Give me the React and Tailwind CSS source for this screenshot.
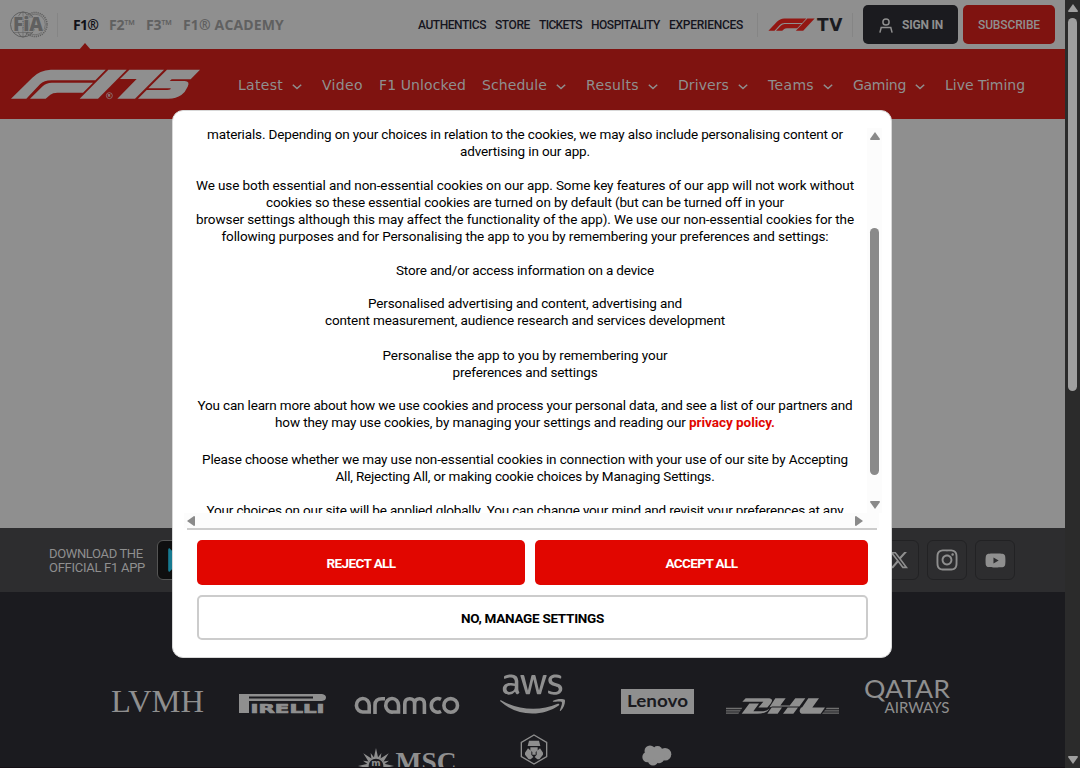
import React, { useLayoutEffect, useRef, useState } from "react";
import { FaAws, FaXTwitter, FaInstagram, FaYoutube, FaGooglePlay } from "react-icons/fa6";

/* Text tracked so that it fills a given width. */
function Fit({ w, className = "", children }) {
  const ref = useRef(null);
  const [spacing, setSpacing] = useState(0);
  useLayoutEffect(() => {
    const el = ref.current;
    el.style.letterSpacing = "0px";
    const natural = el.getBoundingClientRect().width;
    setSpacing((w - natural) / children.length);
    el.style.letterSpacing = `${(w - natural) / children.length}px`;
  }, [w, children]);
  return (
    <span ref={ref} className={`inline-block shrink-0 whitespace-pre ${className}`} style={{ letterSpacing: `${spacing}px` }}>
      {children}
    </span>
  );
}

function Chevron() {
  return (
    <svg className="ml-[9px] mt-[3px] h-[6px] w-[14px]" viewBox="0 0 14 6" fill="none" stroke="currentColor" strokeWidth="1.5">
      <path d="M.8.8 5 4.6 9.2.8" />
    </svg>
  );
}

const F1_SHAPES = (
  <>
    <path d="M33 296 97 233Q119 210 152 209H317L286 241H154Q132 241 120 253L79 296Z" />
    <path d="M90 296 128 259Q139 248 155 248H279L249 278H172Q158 278 151 284L137 296Z" />
    <path d="M325 209H380L294 296H239Z" />
  </>
);

function SeriesBar() {
  const series = [["F1®", 25], ["F2™", 26], ["F3™", 26], ["F1® ACADEMY", 101]];
  const links = [["AUTHENTICS", 68], ["STORE", 35], ["TICKETS", 43], ["HOSPITALITY", 69], ["EXPERIENCES", 74]];
  return (
    <div className="flex h-[49px] items-center bg-[#8f8f8f] pl-[10px] pr-[10px]">
      <svg className="h-[27px] w-[38px] shrink-0" viewBox="0 0 38 27" fill="none" stroke="#606060">
        <circle cx="13" cy="13.5" r="12.5" strokeWidth="1" />
        <ellipse cx="13" cy="13.5" rx="6" ry="12.5" strokeWidth=".8" />
        <path d="M13 1V26M3 6H23M3 21.5H23" strokeWidth=".6" />
        <circle cx="25" cy="13.5" r="12" strokeWidth="1.6" strokeDasharray="1.2 .9" />
        <circle cx="25" cy="13.5" r="10.3" strokeWidth=".6" />
        <text x="3" y="20.3" fill="#606060" stroke="#8f8f8f" strokeWidth="1.6" paintOrder="stroke" fontFamily="Open Sans, sans-serif" fontWeight="800" fontSize="19" textLength="30" lengthAdjust="spacingAndGlyphs">FiA</text>
      </svg>
      <div className="ml-[9px] h-6 w-px bg-[#858585]" />
      <nav className="ml-[15px] flex items-center gap-[11px] font-['Open_Sans',sans-serif] text-[14px] font-bold leading-[47px] text-[#606060]">
        {series.map(([t, w], i) => (
          <Fit key={t} w={w} className={i === 0 ? "text-[#111118]" : ""}>{t}</Fit>
        ))}
      </nav>
      <nav className="ml-auto flex items-center gap-[9px] pt-px text-[12px] font-medium text-[#15151e]">
        {links.map(([t, w]) => (
          <Fit key={t} w={w}>{t}</Fit>
        ))}
      </nav>
      <div className="ml-[14px] h-6 w-px bg-[#858585]" />
      <svg className="ml-[10px] h-[13px] w-[48px]" viewBox="30 206 360 92" preserveAspectRatio="none" fill="#931713">
        {F1_SHAPES}
      </svg>
      <Fit w={26} className="ml-[1px] font-['DejaVu_Sans',sans-serif] text-[17px] font-bold leading-[24px] text-[#1b1b1f]">TV</Fit>
      <div className="ml-[9px] h-6 w-px bg-[#858585]" />
      <button className="ml-[10px] flex h-[39px] w-[95px] items-center rounded-[5px] bg-[#1b1b1f] pl-4 text-[12px] font-bold text-[#8f8f8f]">
        <svg className="mt-px h-[15px] w-[14px]" viewBox="0 0 14 15" fill="none" stroke="#8f8f8f" strokeWidth="1.5">
          <circle cx="7" cy="4" r="3.1" />
          <path d="M.9 14.6 2.2 9.6H11.8L13.1 14.6" />
        </svg>
        <Fit w={41} className="ml-[9px]">SIGN IN</Fit>
      </button>
      <button className="ml-[5px] flex h-[39px] w-[92px] items-center justify-center rounded-[5px] bg-[#7f1310] text-[12px] font-medium text-[#8f8f8f]">
        <Fit w={62}>SUBSCRIBE</Fit>
      </button>
    </div>
  );
}

function MainNav() {
  const items = [
    ["Latest", 45, 1], ["Video", 41, 0], ["F1 Unlocked", 87, 0], ["Schedule", 65, 1], ["Results", 53, 1],
    ["Drivers", 51, 1], ["Teams", 46, 1], ["Gaming", 53, 1], ["Live Timing", 80, 0],
  ];
  return (
    <div className="relative flex h-[70px] items-center bg-[#7f1310] pl-[10px] text-[#8f8f8f]">
      <svg className="absolute -top-[6px] left-[79px] h-[7px] w-3" viewBox="0 0 12 7" fill="#7f1310">
        <path d="M0 7 6 0 12 7Z" />
      </svg>
      <svg className="h-[31px] w-[190px] shrink-0" viewBox="30 207 570 93" fill="#8f8f8f">
        {F1_SHAPES}
        <path d="M388 209H492L405 296H352L410 237H360Z" />
        <path d="M501 209H600L572 238H515L509 243H554Q571 244 563 260 556 276 544 285 529 296 505 296H414L440 270H502Q513 270 512 265H445Z" />
        <circle cx="328" cy="287" r="9" fill="none" stroke="#8f8f8f" strokeWidth="2" />
        <text x="323.5" y="292" fontSize="13" fontFamily="Roboto, sans-serif" fontWeight="700">R</text>
      </svg>
      <nav className="ml-[38px] flex items-center gap-4 pt-[2px] font-['DejaVu_Sans',sans-serif] text-[14px] leading-5">
        {items.map(([t, w, menu]) => (
          <div key={t} className="flex items-center">
            <Fit w={w}>{t}</Fit>
            {menu ? <Chevron /> : null}
          </div>
        ))}
      </nav>
    </div>
  );
}

function AppStrip() {
  const box = "flex h-10 w-10 items-center justify-center rounded-md border border-[#222224]";
  return (
    <div className="flex h-16 items-center bg-[#2d2d2f] pl-[49px] pr-[50px] text-[#8f8f8f]">
      <div className="flex flex-col pt-[2px] text-[13px] leading-[14px]">
        <Fit w={96}>DOWNLOAD THE</Fit>
        <Fit w={96}>OFFICIAL F1 APP</Fit>
      </div>
      <div className="ml-3 flex h-10 w-[120px] items-center rounded-md border border-[#555555] bg-[#0f0f10] pl-[9px]">
        <FaGooglePlay className="h-[26px] w-6 text-[#177a91]" />
      </div>
      <div className="ml-auto flex gap-2">
        <div className={box}><FaXTwitter className="h-5 w-5" /></div>
        <div className={box}><FaInstagram className="h-6 w-6" /></div>
        <div className={box}><FaYoutube className="h-[21px] w-[21px]" /></div>
      </div>
    </div>
  );
}

const LOGO = "shrink-0 overflow-visible fill-[#8f8f8f]";

function Partners() {
  const rays = Array.from({ length: 16 }, (_, i) => i);
  return (
    <div className="h-[176px] overflow-hidden border-b border-[#151015] bg-[#1b1b1f]">
      <div className="flex h-[122px] items-end pl-[111px]">
        <svg className={`${LOGO} mb-px h-6 w-[93px]`} viewBox="0 0 93 24">
          <text x="0" y="23" fontFamily="Liberation Serif, serif" fontSize="32" textLength="93" lengthAdjust="spacingAndGlyphs">LVMH</text>
        </svg>
        <svg className={`${LOGO} ml-[35px] h-5 w-[88px]`} viewBox="0 0 88 20">
          <path fillRule="evenodd" d="M0 0H83Q87 .5 87 3.5T83 7H10V19H0ZM10 2.5V4.5H74V2.5Z" />
          <text x="11.5" y="19" fontFamily="DejaVu Sans, sans-serif" fontWeight="700" fontSize="13" stroke="#8f8f8f" strokeWidth=".7" textLength="74" lengthAdjust="spacingAndGlyphs">IRELLI</text>
        </svg>
        <svg className={`${LOGO} ml-7 h-[19px] w-[105px]`} viewBox="0 0 105 19" style={{ fill: "none" }} stroke="#8f8f8f" strokeWidth="3.6">
          <path d="M14 17H8.5A6.4 6.8 0 1 1 14.2 10.5V17ZM20 19V10Q20 3.8 27 3.8H30M43.2 17H38A6.4 6.8 0 1 1 43.5 10.5V17ZM49.8 19V9Q49.8 3.8 54.7 3.8T59.6 9V19M59.6 9Q59.6 3.8 64.5 3.8T69.4 9V19M86 4.4A6.6 6.8 0 1 0 86 16.4" />
          <circle cx="95.7" cy="10.4" r="6.8" />
        </svg>
        <FaAws className="ml-10 h-[52px] w-[65px] -mb-[6px] shrink-0 text-[#8f8f8f]" />
        <svg className={`${LOGO} ml-14 h-[25px] w-[73px]`} viewBox="0 0 73 25">
          <path d="M0 0H73V25H0Z" />
          <text x="6" y="17.5" fill="#1b1b1f" fontFamily="Lato, sans-serif" fontWeight="700" fontSize="17" textLength="61" lengthAdjust="spacingAndGlyphs">Lenovo</text>
        </svg>
        <svg className={`${LOGO} ml-8 h-[17px] w-[113px]`} viewBox="0 0 339 50">
          <path d="M59 3H130Q144 5 134 19L124 31H97L112 14H49ZM70 19H99L82 42H112Q122 42 131 34L124 42Q113 50 94 50H47ZM148 3H179L163 25H191L208 3H238L220 28H139L130 31ZM137 31H168L155 50H124ZM185 31H216L202 50H171ZM247 3H279L259 31H228ZM225 31H297L284 50H227Q216 46 225 31Z" />
          <path fill="#707070" d="M0 32H49L46 36H0ZM0 39H44L42 43H0ZM0 46H40L37 50H0ZM302 32H339V36H299ZM297 39H339V43H294ZM292 46H339V50H288Z" />
        </svg>
        <svg className={`${LOGO} ml-[26px] h-[37px] w-[86px]`} viewBox="0 0 86 37">
          <text x="-1" y="21" fontFamily="Lato, sans-serif" fontSize="25" textLength="86" lengthAdjust="spacingAndGlyphs">QATAR</text>
          <text x="19.5" y="35.5" fontFamily="Lato, sans-serif" fontSize="15.5" textLength="65" lengthAdjust="spacingAndGlyphs">AIRWAYS</text>
        </svg>
      </div>
      <div className="flex items-start pl-[359px] pt-5">
        <svg className={`${LOGO} mt-[14px] h-8 w-[98px]`} viewBox="0 0 98 32">
          {rays.map((i) => (
            <path key={i} d={i % 2 ? "M17 4 18.6 10H15.4Z" : "M17 0 19.2 10H14.8Z"} transform={`rotate(${i * 22.5} 17 18)`} />
          ))}
          <circle cx="17" cy="18" r="8" fill="#1b1b1f" stroke="#8f8f8f" strokeWidth="1.3" />
          <text x="12.3" y="17.5" fontFamily="DejaVu Sans, sans-serif" fontWeight="700" fontSize="9">m</text>
          <text x="36.5" y="23" fontFamily="Liberation Serif, serif" fontWeight="700" fontSize="27" textLength="61" lengthAdjust="spacingAndGlyphs">MSC</text>
        </svg>
        <svg className={`${LOGO} ml-[63px] h-[31px] w-7`} viewBox="0 0 84 93">
          <path d="M42 3 80 25V68L42 90 4 68V25Z" fill="none" stroke="#8f8f8f" strokeWidth="4" />
          <path d="M27 20H57L61 36H23ZM31 40H53V49L47 54V62H37V54L31 49ZM15 56 24 43 34 52V62L40 69 32 76H26L15 62ZM69 56 60 43 50 52V62L44 69 52 76H58L69 62Z" />
        </svg>
        <svg className={`${LOGO} ml-[94px] mt-[11px] h-[21px] w-[30px]`} viewBox="0 0 30 21">
          <circle cx="8" cy="6" r="5.5" /><circle cx="15.5" cy="6" r="5" /><circle cx="23" cy="9.2" r="6.3" />
          <circle cx="5.5" cy="12" r="5.2" /><circle cx="11" cy="15.3" r="5.2" /><circle cx="17" cy="12.8" r="5.4" />
          <path d="M5 5H22V14H5Z" />
        </svg>
      </div>
    </div>
  );
}

const PARAGRAPHS = [
  { gap: "", lines: [["materials. Depending on your choices in relation to the cookies, we may also include personalising content or", 636], ["advertising in our app.", 130]] },
  { gap: "mt-[17px]", lines: [
    ["We use both essential and non-essential cookies on our app. Some key features of our app will not work without", 658],
    ["cookies so these essential cookies are turned on by default (but can be turned off in your", 518],
    ["browser settings although this may affect the functionality of the app). We use our non-essential cookies for the", 658],
    ["following purposes and for Personalising the app to you by remembering your preferences and settings:", 607],
  ] },
  { gap: "mt-[17px]", lines: [["Store and/or access information on a device", 258]] },
  { gap: "mt-[16px]", lines: [["Personalised advertising and content, advertising and", 314], ["content measurement, audience research and services development", 400]] },
  { gap: "mt-[18px]", lines: [["Personalise the app to you by remembering your", 285], ["preferences and settings", 145]] },
  { gap: "mt-[16px]", lines: [["You can learn more about how we use cookies and process your personal data, and see a list of our partners and", 655], ["how they may use cookies, by managing your settings and reading our ", 414, "privacy policy."]] },
  { gap: "mt-[20px]", lines: [["Please choose whether we may use non-essential cookies in connection with your use of our site by Accepting", 646], ["All, Rejecting All, or making cookie choices by Managing Settings.", 379]] },
  { gap: "mt-[17px]", lines: [["Your choices on our site will be applied globally. You can change your mind and revisit your preferences at any", 637]] },
];

function ConsentDialog() {
  const btn = "flex h-[45px] items-center justify-center rounded-[5px] text-[13.5px] font-bold";
  return (
    <div role="dialog" className="absolute left-[172px] top-[110px] flex h-[548px] w-[720px] flex-col rounded-[11px] border border-[#d8d8d8] bg-white pt-[15px] text-black">
      <div className="flex h-[387px] pl-[15px]">
        <div className="h-full w-[674px] overflow-hidden text-[13.5px] leading-[17px]">
          {PARAGRAPHS.map((p, i) => (
            <div key={i} className={p.gap}>
              {p.lines.map(([t, w, link]) => (
                <div key={t} className="flex h-[17px] justify-center">
                  <Fit w={w}>{t}</Fit>
                  {link ? <Fit w={86} className="font-bold text-[#e10600]">{link}</Fit> : null}
                </div>
              ))}
            </div>
          ))}
        </div>
        <div className="ml-[5px] mt-[2px] flex w-[15px] flex-col items-center bg-[#fcfcfc] pt-[4px] text-[#8a8a8a]">
          <svg className="h-2 w-[10px] fill-current" viewBox="0 0 10 8"><path d="M5 0 10 7Q10 8 9 8H1Q0 8 0 7Z" /></svg>
          <div className="mt-[88px] h-[247px] w-[9px] rounded-full bg-[#8a8a8a]" />
          <svg className="mt-[26px] h-2 w-[10px] shrink-0 fill-current" viewBox="0 0 10 8"><path d="M5 8 10 1Q10 0 9 0H1Q0 0 0 1Z" /></svg>
        </div>
      </div>
      <div className="ml-[11px] flex h-[15px] w-[695px] items-center justify-between bg-[#fcfcfc] pl-[3px] pr-4 text-[#8a8a8a]">
        <svg className="h-[10px] w-2 fill-current" viewBox="0 0 8 10"><path d="M0 5 7 0Q8 0 8 1V9Q8 10 7 10Z" /></svg>
        <svg className="h-[10px] w-2 fill-current" viewBox="0 0 8 10"><path d="M8 5 1 0Q0 0 0 1V9Q0 10 1 10Z" /></svg>
      </div>
      <div className="ml-[14px] h-[2px] w-[690px] bg-[#cccccc]" />
      <div className="mt-[10px] flex gap-[10px] pl-6">
        <button className={`${btn} w-[328px] bg-[#e10600] pt-px text-white`}><Fit w={69}>REJECT ALL</Fit></button>
        <button className={`${btn} w-[333px] bg-[#e10600] pt-px text-white`}><Fit w={72}>ACCEPT ALL</Fit></button>
      </div>
      <button className={`${btn} ml-6 mt-[10px] w-[671px] border-2 border-[#cccccc] bg-white pt-px`}><Fit w={143}>NO, MANAGE SETTINGS</Fit></button>
    </div>
  );
}

export default function App() {
  return (
    <div className="relative flex h-[768px] w-[1080px] overflow-hidden bg-[#2b2b2b] font-['Roboto',sans-serif]">
      <div className="flex w-[1065px] flex-col">
        <SeriesBar />
        <MainNav />
        <main className="h-[409px] bg-[#8f8f8f]" />
        <AppStrip />
        <Partners />
      </div>
      <div className="flex w-[15px] flex-col items-center text-[#9f9f9f]">
        <svg className="mt-[4px] h-2 w-[10px] shrink-0 fill-current" viewBox="0 0 10 8"><path d="M5 0 10 7Q10 8 9 8H1Q0 8 0 7Z" /></svg>
        <div className="mt-[6px] h-[373px] w-[9px] rounded-full bg-[#9f9f9f]" />
        <svg className="mb-[4px] mt-auto h-2 w-[10px] shrink-0 fill-current" viewBox="0 0 10 8"><path d="M5 8 10 1Q10 0 9 0H1Q0 0 0 1Z" /></svg>
      </div>
      <ConsentDialog />
    </div>
  );
}
